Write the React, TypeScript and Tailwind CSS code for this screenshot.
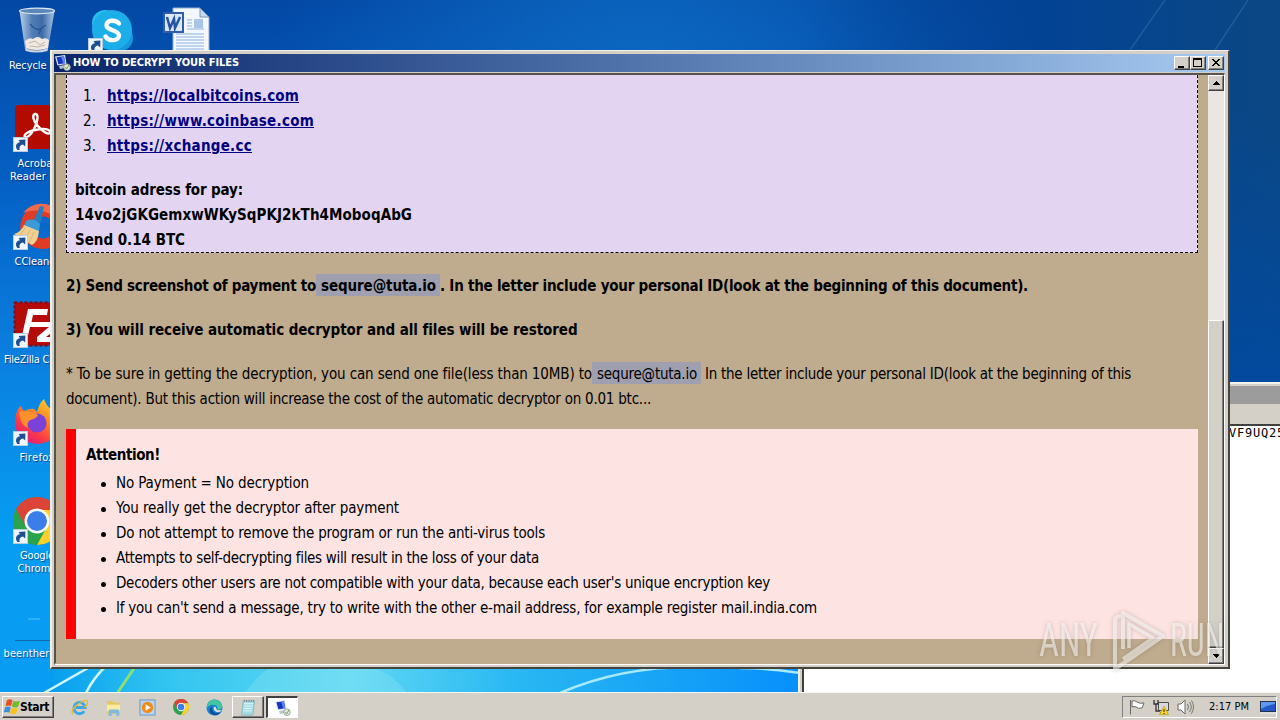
import { useLayoutEffect, useRef, useState, type ReactNode } from "react";

/** Inline text spaced so that it fills exactly `w` pixels. */
function Fit({ w, children, className = "" }: { w: number; children: string; className?: string }) {
  const ref = useRef<HTMLSpanElement>(null);
  const [spacing, setSpacing] = useState(0);
  useLayoutEffect(() => {
    const el = ref.current;
    if (!el) return;
    setSpacing((w - el.getBoundingClientRect().width) / children.length);
  }, [w, children]);
  return (
    <span ref={ref} className={`inline-block whitespace-pre ${className}`} style={{ letterSpacing: `${spacing}px` }}>
      {children}
    </span>
  );
}

function Shortcut({ className }: { className: string }) {
  return (
    <svg viewBox="0 0 15 15" className={`absolute h-[15px] w-[15px] ${className}`}>
      <rect x=".5" y=".5" width="14" height="14" fill="#eef5fb" stroke="#b9cde0" />
      <path d="M4.500 13C1.800 9.500 3 5.600 7 5.200L5.600 3 12.400 2.600l-.2 6.800-2.200-1.800C7.200 8 5.800 10.200 6.800 13Z" fill="#1d4f92" />
    </svg>
  );
}

function RecycleBin() {
  return (
    <svg viewBox="0 0 38 46" className="h-[46px] w-[38px]">
      <defs>
        <linearGradient id="bin" x1="0" x2="1">
          <stop offset="0" stopColor="#b9cfe6" />
          <stop offset=".35" stopColor="#537fb8" />
          <stop offset=".65" stopColor="#3f6ca8" />
          <stop offset="1" stopColor="#a4c4e2" />
        </linearGradient>
      </defs>
      <path d="M1.500 4 7 42q12 5 23 0L36.500 4Z" fill="url(#bin)" />
      <path d="M7 34q4-4 8-2 5-4 9 0 4-2 7 1l-1 8q-11 4-22 0Z" fill="#efe9e2" />
      <path d="M11 36l6-2 5 4 5-3M12 39l8 1 7-2" stroke="#c4b2a0" fill="none" />
      <path d="M7 41q12 5 23 0l-.4 3q-11 3-22 0Z" fill="#c8d3dc" />
      <path d="M12 17q6 7 10 5l6-4M23 22l-2 5" stroke="#2a5599" strokeWidth="1.500" fill="none" />
      <ellipse cx="19" cy="4" rx="17.500" ry="2.800" fill="#5f88ba" stroke="#dce8f3" strokeWidth="1.200" />
    </svg>
  );
}

function Skype() {
  return (
    <svg viewBox="0 0 44 46" className="h-[46px] w-[44px]">
      <circle cx="15" cy="15" r="13" fill="#27c0ee" />
      <circle cx="30" cy="30" r="13" fill="#1596dd" />
      <circle cx="22" cy="22" r="20" fill="#1caee8" />
      <path d="M29 15.500C26 11.500 16 11.500 16.500 17.500c.4 5.500 12.500 4 12.500 10C29 33 19 34 15.500 28.500" fill="none" stroke="#fff" strokeWidth="4.400" strokeLinecap="round" />
    </svg>
  );
}

function WordDoc() {
  return (
    <svg viewBox="0 0 48 46" className="h-[46px] w-[48px]">
      <path d="M10 1h27l9 9v36H10Z" fill="#f3f8fe" stroke="#90aed0" />
      <path d="M37 1v9h9Z" fill="#c5d9ee" stroke="#7898bd" />
      <rect x="31" y="12" width="9" height="9" fill="#a9c5e8" />
      <path d="M24 13h5M24 16h5M24 19h5M24 22h17M13 27h28M13 30h28M13 33h28M13 36h28M13 39h28M13 42h28" stroke="#8fb0dc" />
      <rect x="1" y="6" width="19" height="19" fill="#dce8f8" stroke="#2f5faa" strokeWidth="2" />
      <path d="M4 10l3 11 4-9 1 9 5-11" fill="none" stroke="#2555a4" strokeWidth="2.500" />
    </svg>
  );
}

function Acrobat() {
  return (
    <svg viewBox="0 0 44 44" className="h-[44px] w-[44px]">
      <rect width="44" height="44" rx="4" fill="#b30b00" />
      <path d="M20 9c4-1 3 8-1 15-3 6-7 9-9 8-2-2 3-6 10-7 8-2 15-1 15 2 0 4-8 0-13-7-4-5-5-10-2-11Z" fill="none" stroke="#fff" strokeWidth="2.400" />
    </svg>
  );
}

function CCleaner() {
  return (
    <svg viewBox="0 0 48 48" className="h-[48px] w-[48px]">
      <path d="M46 8A23 22 0 1 0 46 40L38 32A11 11 0 1 1 38 17Z" fill="#df3b25" />
      <path d="M10 10A23 22 0 0 1 46 8l-5 5Q25 4 10 10Z" fill="#f26a4b" />
      <path d="M27 3l4 1-4 17-7-2Z" fill="#267fc0" />
      <path d="M13 18q7-4 14 3l-1 7-15-5Z" fill="#3b9ad7" />
      <path d="M11 22l15 6q-1 11-7 14L1 31q7-2 10-9Z" fill="#f0cf91" />
      <path d="M12 25l-5 7M17 27l-5 9M21 29l-5 11" stroke="#dcb575" />
    </svg>
  );
}

function FileZilla() {
  return (
    <svg viewBox="0 0 48 46" className="h-[46px] w-[48px]">
      <rect x="1.500" y="1.500" width="45" height="43" fill="#b50b0b" stroke="#7d0c14" strokeWidth="2" strokeDasharray="3 2" />
      <path d="M15 8h20l-1 6H20l-1.500 7h11l-1 5H17l-3 13H8Z" fill="#fff" />
      <path d="M27 21h19v5L33 36h12v5H24v-5l12-10H26Z" fill="#fff" />
    </svg>
  );
}

function Firefox() {
  return (
    <svg viewBox="0 0 46 46" className="h-[46px] w-[46px]">
      <defs>
        <linearGradient id="fox" x1="1" y1="0" x2=".3" y2="1">
          <stop offset="0" stopColor="#ffe83a" />
          <stop offset=".4" stopColor="#ff9322" />
          <stop offset=".75" stopColor="#fb3b45" />
          <stop offset="1" stopColor="#e01a7c" />
        </linearGradient>
      </defs>
      <path d="M3 12q2-4 4-5 1 4 4 5 4-3 9-2l3 3Q25 4 30 0q2 7 9 12 6 7 5 15-2 17-21 18Q2 43 1 24 1 17 3 12Z" fill="url(#fox)" />
      <circle cx="23" cy="24" r="9.500" fill="#7a42d8" />
      <path d="M5 13q7-3 14 1 4 0 5 3-3 3-8 4-4 3-2 8-8-3-9-16Z" fill="#ff8f2b" />
    </svg>
  );
}

function Chrome({ className }: { className: string }) {
  return (
    <svg viewBox="0 0 48 48" className={className}>
      <circle cx="24" cy="24" r="24" fill="#2ba24c" />
      <path d="M3.200 12A24 24 0 0 1 44.800 12L45 13H24L13 30Z" fill="#dc4437" />
      <path d="M44.800 12A24 24 0 0 1 24 48L34 30 24 13h21Z" fill="#fdd12d" />
      <circle cx="24" cy="24" r="12.500" fill="#fff" />
      <circle cx="24" cy="24" r="10" fill="#3b7de9" />
    </svg>
  );
}

function ComputerIcon({ className }: { className: string }) {
  return (
    <svg viewBox="0 0 16 16" className={className}>
      <path d="M0 1.500 10 0l1.500 9L2.500 10.500Z" fill="#dfe7f2" />
      <path d="M1.500 2.200l7.500-1 1.300 7-7 1.100Z" fill="#1734c4" />
      <path d="M6 1.600l3-.4 1.300 7-2 .3Z" fill="#5a86f0" />
      <path d="M4 11l6-1 2 2.500-7 1.500Z" fill="#bcc6d2" />
      <circle cx="12" cy="12.200" r="3.300" fill="#dfe9df" stroke="#8b988c" strokeWidth=".8" />
      <path d="M10.500 12l1 2 2.500-4" stroke="#7ba54f" fill="none" />
    </svg>
  );
}

function DesktopIcon({ className, children, label }: { className: string; children: ReactNode; label: [string, number][] }) {
  return (
    <div className={`absolute flex w-[80px] flex-col items-center text-[11px] leading-[13px] text-white [text-shadow:1px_1px_1px_#0038] ${className}`}>
      <div className="relative flex h-[52px] w-[48px] items-start justify-center">{children}</div>
      {label.map(([text, w]) => (
        <Fit key={text} w={w}>{text}</Fit>
      ))}
    </div>
  );
}

const raised =
  "border border-t-white border-l-white border-r-[#404040] border-b-[#404040] bg-[#d4d0c8] shadow-[inset_-1px_-1px_0_#808080]";

function CaptionButton({ children }: { children: ReactNode }) {
  return (
    <div className={`h-[14px] w-[16px] ${raised}`}>
      <svg viewBox="0 0 14 12" className="h-[12px] w-[14px]" shapeRendering="crispEdges">
        {children}
      </svg>
    </div>
  );
}

function ScrollButton({ d }: { d: string }) {
  return (
    <div className={`h-[16px] w-[16px] shrink-0 ${raised}`}>
      <svg viewBox="0 0 14 14" className="h-[14px] w-[14px]" shapeRendering="crispEdges">
        <path d={d} fill="#000" />
      </svg>
    </div>
  );
}

const links: [string, number][] = [
  ["https://localbitcoins.com", 192],
  ["https://www.coinbase.com", 207],
  ["https://xchange.cc", 145],
];

const warnings: [string, number][] = [
  ["No Payment = No decryption", 193],
  ["You really get the decryptor after payment", 283],
  ["Do not attempt to remove the program or run the anti-virus tools", 429],
  ["Attempts to self-decrypting files will result in the loss of your data", 423],
  ["Decoders other users are not compatible with your data, because each user's unique encryption key", 654],
  ["If you can't send a message, try to write with the other e-mail address, for example register mail.india.com", 701],
];

function Note() {
  return (
    <div className="h-[589px] w-[1152px] overflow-hidden bg-[#bfab8d] pl-[10px] text-[15px] leading-[25px] text-black">
      <section className="h-[178px] w-[1132px] border border-t-0 border-dashed border-black bg-[#e3d5f1] pt-[9px] pl-[8px]">
        <ol className="pl-[8px]">
          {links.map(([text, w], i) => (
            <li key={text} className="flex h-[25px]">
              <span className="w-[24px]"><Fit w={13}>{`${i + 1}.`}</Fit></span>
              <Fit w={w} className="font-bold text-[#000080] underline">{text}</Fit>
            </li>
          ))}
        </ol>
        <div className="flex flex-col items-start pt-[19px] font-bold">
          <Fit w={168}>bitcoin adress for pay:</Fit>
          <Fit w={337}>14vo2jGKGemxwWKySqPKJ2kTh4MoboqAbG</Fit>
          <Fit w={110}>Send 0.14 BTC</Fit>
        </div>
      </section>

      <p className="mt-[21px] flex h-[25px] font-bold">
        <Fit w={250}>2) Send screenshot of payment to</Fit>
        <span className="h-[22px] w-[124px] bg-[#9f9fb0] pl-[5px]"><Fit w={115}>sequre@tuta.io</Fit></span>
        <Fit w={588}>. In the letter include your personal ID(look at the beginning of this document).</Fit>
      </p>
      <p className="mt-[19px] h-[25px] font-bold">
        <Fit w={511}>3) You will receive automatic decryptor and all files will be restored</Fit>
      </p>
      <div className="mt-[19px]">
        <p className="flex h-[25px]">
          <Fit w={526}>* To be sure in getting the decryption, you can send one file(less than 10MB) to</Fit>
          <span className="h-[22px] w-[109px] bg-[#9f9fb0] pl-[5px]"><Fit w={100}>sequre@tuta.io</Fit></span>
          <Fit w={430}> In the letter include your personal ID(look at the beginning of this</Fit>
        </p>
        <p className="h-[25px]">
          <Fit w={585}>document). But this action will increase the cost of the automatic decryptor on 0.01 btc...</Fit>
        </p>
      </div>

      <section className="mt-[17px] h-[210px] w-[1132px] border-l-[10px] border-[#ff0000] bg-[#fde4e2] pt-[14px] pl-[10px]">
        <h2 className="h-[28px] font-bold"><Fit w={74}>Attention!</Fit></h2>
        <ul>
          {warnings.map(([text, w]) => (
            <li key={text} className="flex h-[25px] items-start">
              <span className="mt-[11px] mr-[10px] ml-[15px] h-[5px] w-[5px] rounded-full bg-black" />
              <Fit w={w}>{text}</Fit>
            </li>
          ))}
        </ul>
      </section>
    </div>
  );
}

function NoteWindow() {
  return (
    <div className="absolute top-[50px] left-[50px] flex h-[619px] w-[1180px] flex-col border-t border-r-2 border-b-2 border-l-2 border-t-[#f2f0ec] border-r-[#45443f] border-b-[#45443f] border-l-[#f2f0ec] bg-[#d4d0c8] pt-[3px] pl-[2px]">
      <div className="flex h-[18px] w-[1171px] items-center bg-linear-to-r from-[#0a246a] to-[#a6caf0] pr-[1px] pl-[1px]">
        <ComputerIcon className="h-[16px] w-[16px]" />
        <div className="ml-[2px] grow text-[11px] font-bold text-white">
          <Fit w={166}>HOW TO DECRYPT YOUR FILES</Fit>
        </div>
        <div className="flex">
          <CaptionButton><path d="M3 9h6v2H3z" /></CaptionButton>
          <CaptionButton><path d="M2 1h9v9H2zM3 3v6h7V3z" fillRule="evenodd" /></CaptionButton>
          <div className="w-[2px]" />
          <CaptionButton><path d="M3 2h2v1h1v1h2V3h1V2h2v1h-1v1H9v1H8v1h1v1h1v1h1v1H9V8H8V7H6v1H5v1H3V8h1V7h1V6h1V5H5V4H4V3H3z" /></CaptionButton>
        </div>
      </div>
      <div className="mt-[1px] flex h-[592px] w-[1171px] border-t-2 border-r border-b-2 border-l-2 border-t-[#55534d] border-r-white border-b-white border-l-[#55534d]">
        <Note />
        <div className="flex h-[589px] w-[16px] shrink-0 flex-col bg-[#eae7e3]">
          <ScrollButton d="M7 5h1v1h1v1h1v1h1v1H4V8h1V7h1V6h1z" />
          <div className="h-[229px]" />
          <div className={`grow ${raised}`} />
          <ScrollButton d="M4 5h7v1h-1v1H9v1H8v1H7V8H6V7H5V6H4z" />
        </div>
      </div>
    </div>
  );
}

function Watermark() {
  return (
    <div className="absolute top-[606px] left-[1039px] flex h-[68px] w-[200px] items-center text-white/55 drop-shadow-[0_0_2px_rgba(80,70,60,0.5)]">
      <span className="w-[70px]"><span className="inline-block origin-left scale-x-[0.75] font-['Roboto'] text-[46px] leading-none">ANY</span></span>
      <svg viewBox="0 0 58 66" className="h-[66px] w-[58px] shrink-0">
        <path d="M14 42V6L54 29 6 62V14q0-5 6-5" fill="none" stroke="currentColor" strokeWidth="4" strokeLinejoin="round" />
        <path d="M14 52 44 31 20 17v24" fill="none" stroke="currentColor" strokeWidth="3.500" strokeLinejoin="round" />
      </svg>
      <span className="ml-[3px] inline-block origin-left scale-x-[0.69] font-['Roboto'] text-[46px] leading-none">RUN</span>
    </div>
  );
}

function Taskbar() {
  return (
    <div className="absolute bottom-0 left-0 flex h-[28px] w-full items-center border-t border-[#f8f6f3] bg-[#d4d0c8] pt-[1px]">
      <button className={`ml-[2px] flex h-[22px] w-[52px] items-center ${raised}`}>
        <svg viewBox="0 0 16 16" className="ml-[1px] h-[16px] w-[16px]">
          <path d="M3 1q3-1.500 5.500.2L7 7Q4.500 6 1.500 7Z" fill="#ee4a1f" />
          <path d="M9.300 1.700q3 1.500 6.500 0L14 8Q11 9 7.800 7.500Z" fill="#76b82c" />
          <path d="M1.200 8q3-1 5.500.3l-1.400 5.500Q3 12.500-.3 13.600Z" fill="#3c8fe0" />
          <path d="M7.500 8.500q3 1.600 6.200.5l-1.600 5.700q-3 1-6.200-.5Z" fill="#fbc318" />
        </svg>
        <Fit w={29} className="text-[12px] leading-none font-bold">Start</Fit>
      </button>
      <div className="ml-[17px] flex items-center gap-[17px]">
        <svg viewBox="0 0 18 18" className="h-[17px] w-[17px]">
          <path d="M14 13A6 6 0 1 1 15 9H5" fill="none" stroke="#3aa7e6" strokeWidth="3" />
          <path d="M2 16Q-1 12 7 6T17 2q2 3-3 7" fill="none" stroke="#e9b92d" strokeWidth="1.500" />
        </svg>
        <svg viewBox="0 0 18 18" className="h-[17px] w-[17px]">
          <path d="M2 2h6l1 2h7v12H2Z" fill="#e8c65d" />
          <path d="M2 6h14v7H2Z" fill="#fbeaa2" />
          <path d="M4 18v-6q0-1 1-1h9q1 0 1 1v6h-3v-3H7v3Z" fill="#7fbbe0" />
        </svg>
        <svg viewBox="0 0 18 18" className="h-[17px] w-[17px]">
          <rect x="1" y="1" width="16" height="16" fill="#b8d5ee" stroke="#6497c8" />
          <circle cx="9" cy="9" r="6" fill="#f38a17" />
          <path d="M7 5.500 12.500 9 7 12.500Z" fill="#fff" />
        </svg>
        <Chrome className="h-[16px] w-[16px]" />
        <svg viewBox="0 0 18 18" className="h-[17px] w-[17px]">
          <circle cx="9" cy="9" r="8.500" fill="#1683cc" />
          <path d="M1 7Q4-1 11 1t6 8q-1 3-5 2 1-5-5-5-4 0-6 4Z" fill="#42c6a1" />
          <path d="M7 8q-2 6 4 7l5-1q-6 6-11 1-3-5 2-7Z" fill="#0d4d9c" />
          <path d="M8 9q2-2 3 1-1 2 6 2l-3 2Q8 14 8 9Z" fill="#d9e2e1" />
        </svg>
      </div>
      <div className={`ml-[9px] flex h-[22px] w-[32px] items-center justify-center ${raised}`}>
        <svg viewBox="0 0 16 18" className="h-[17px] w-[16px]">
          <path d="M3 2h12l-2 15H1Z" fill="#a5dce4" stroke="#8fb5bd" />
          <path d="M4 5h9M4 7.500h9M3.500 10h9M3 12.500h9" stroke="#e1f8fb" />
          <path d="M4 1v2M6.500 1v2M9 1v2M11.500 1v2M14 1v2" stroke="#777" />
        </svg>
      </div>
      <div className="ml-[2px] flex h-[22px] w-[32px] items-center justify-center border-t-2 border-l-2 border-r border-b border-t-[#404040] border-r-white border-b-white border-l-[#404040] bg-white">
        <ComputerIcon className="h-[16px] w-[16px]" />
      </div>
      <div className="mr-[3px] ml-auto flex h-[22px] w-[155px] items-center border border-t-[#808080] border-r-white border-b-white border-l-[#808080]">
        <svg viewBox="0 0 16 16" className="ml-[6px] h-[16px] w-[16px]">
          <path d="M1.500 1v14.500M3 2q3-1 5 1 3 2 7 1l-2 5q-4 1-6-1-2-1-4 0Z" fill="#fff" stroke="#696969" />
        </svg>
        <svg viewBox="0 0 16 16" className="ml-[8px] h-[16px] w-[16px]">
          <path d="M5.500 3.500h10v8h-10Z" fill="#d7d9df" stroke="#4e4e4e" />
          <path d="M1 1v4h4V1M3 5v7h4M7 14h6" fill="none" stroke="#343434" strokeWidth="1.300" />
          <path d="M11 7l4.500 8.500h-9Z" fill="#ffd62b" stroke="#b39300" strokeWidth=".6" />
          <path d="M11 10v3M11 14v1" stroke="#222" />
        </svg>
        <svg viewBox="0 0 17 16" className="ml-[8px] h-[16px] w-[17px]">
          <path d="M1 5h3l4-4v14l-4-4H1Z" fill="#fff" stroke="#6a6a6a" />
          <path d="M10.500 5q2 3 0 6M12.500 3q3.500 5 0 10M14.500 1.500q4 6.500 0 13" fill="none" stroke="#777" />
        </svg>
        <Fit w={40} className="ml-[15px] text-[11px]">2:17 PM</Fit>
        <svg viewBox="0 0 16 13" className="ml-[11px] h-[13px] w-[16px]">
          <rect x=".5" y=".5" width="15" height="10" fill="#2459c9" stroke="#24334a" />
          <path d="M1 1h14v2Q7 4 1 8Z" fill="#5c9af2" />
          <path d="M0 12h16" stroke="#e9eef3" />
        </svg>
      </div>
    </div>
  );
}

function Wallpaper() {
  return (
    <svg viewBox="0 0 1280 720" className="absolute inset-0 h-full w-full" preserveAspectRatio="none">
      <defs>
        <linearGradient id="sky" x1="0" y1="0" x2="0" y2="1">
          <stop offset="0" stopColor="#0347a4" />
          <stop offset=".25" stopColor="#0560c4" />
          <stop offset=".5" stopColor="#0a80e0" />
          <stop offset=".75" stopColor="#079df3" />
          <stop offset="1" stopColor="#0a9cf4" />
        </linearGradient>
        <radialGradient id="top" gradientUnits="userSpaceOnUse" cx="640" cy="120" r="380">
          <stop offset="0" stopColor="#0d6cc4" />
          <stop offset="1" stopColor="#0d6cc4" stopOpacity="0" />
        </radialGradient>
        <linearGradient id="right" x1="0" x2="1">
          <stop offset="0" stopColor="#044394" stopOpacity="0" />
          <stop offset=".5" stopColor="#034395" />
          <stop offset="1" stopColor="#0b4783" />
        </linearGradient>
        <linearGradient id="lower" x1="0" y1="0" x2="0" y2="1">
          <stop offset="0" stopColor="#024a9f" stopOpacity="0" />
          <stop offset="1" stopColor="#024a9f" />
        </linearGradient>
        <linearGradient id="glow" x1="0" x2="1">
          <stop offset="0" stopColor="#059eef" />
          <stop offset=".15" stopColor="#31c4f0" />
          <stop offset=".4" stopColor="#60d8f4" />
          <stop offset=".62" stopColor="#29b8f2" />
          <stop offset="1" stopColor="#0790fb" />
        </linearGradient>
      </defs>
      <rect width="1280" height="720" fill="url(#sky)" />
      <rect width="1280" height="300" fill="url(#top)" />
      <rect x="800" width="480" height="390" fill="url(#right)" />
      <rect x="1200" y="100" width="80" height="290" fill="url(#lower)" />
      <path d="M1248 0 1215 50M1165 0l-35 50" stroke="#4b83b5" strokeOpacity=".35" strokeWidth="1.500" />
      <rect x="50" y="660" width="750" height="35" fill="url(#glow)" />
      <path d="M245 693q15-24 38-30h80q30 10 44 30" fill="#a0edf0" fillOpacity=".25" />
      <path d="M44 693l51-29M86 693q7-15 22-29" stroke="#d3f9ff" strokeWidth="2.500" fill="none" />
      <path d="M118 692l19-28" stroke="#8cdf70" strokeWidth="3" />
      <path d="M560 693q60-26 130-26M740 668q30 0 60 5" stroke="#a8e9ff" strokeWidth="2.500" fill="none" />
      <path d="M28 619h12" stroke="#4fc4f6" />
      <path d="M15 640.500h36" stroke="#1268a6" />
    </svg>
  );
}

export default function App() {
  return (
    <main className="relative h-[720px] w-[1280px] overflow-hidden bg-[#0560c4] font-['DejaVu_Sans_Condensed','DejaVu_Sans',sans-serif] [font-stretch:condensed]">
      <Wallpaper />

      <DesktopIcon className="top-[7px] left-[-3px]" label={[["Recycle Bin", 56]]}><RecycleBin /></DesktopIcon>
      <DesktopIcon className="top-[8px] left-[72px]" label={[]}><Skype /><Shortcut className="top-[30px] left-0" /></DesktopIcon>
      <DesktopIcon className="top-[7px] left-[147px]" label={[]}><WordDoc /></DesktopIcon>
      <DesktopIcon className="top-[105px] left-[-3px]" label={[["Acrobat", 39], ["Reader DC", 54]]}><Acrobat /><Shortcut className="top-[32px] left-0" /></DesktopIcon>
      <DesktopIcon className="top-[203px] left-[-3px]" label={[["CCleaner", 45]]}><CCleaner /><Shortcut className="top-[32px] left-0" /></DesktopIcon>
      <DesktopIcon className="top-[301px] left-[-3px]" label={[["FileZilla Client", 66]]}><FileZilla /><Shortcut className="top-[32px] left-0" /></DesktopIcon>
      <DesktopIcon className="top-[399px] left-[-3px]" label={[["Firefox", 35]]}><Firefox /><Shortcut className="top-[32px] left-0" /></DesktopIcon>
      <DesktopIcon className="top-[497px] left-[-3px]" label={[["Google", 34], ["Chrome", 39]]}><Chrome className="h-[48px] w-[48px]" /><Shortcut className="top-[32px] left-0" /></DesktopIcon>
      <DesktopIcon className="top-[595px] left-[-3px]" label={[["beenthere.rtf", 67]]}><span /></DesktopIcon>

      <div className="absolute top-[382px] left-[798px] flex h-[330px] w-[600px] flex-col border-t-2 border-l-2 border-[#f3f1ed] bg-[#d4d0c8] pt-[2px] pl-[2px]">
        <div className="h-[18px] bg-[#9c9c9c]" />
        <div className="h-[20px]" />
        <div className="grow border-t-2 border-l-2 border-[#404040] bg-white pl-[425px] font-['DejaVu_Sans_Mono',monospace] text-[12px] leading-[14px] tracking-[0.78px]">VF9UQ25</div>
      </div>

      <NoteWindow />
      <Taskbar />
      <Watermark />
    </main>
  );
}
